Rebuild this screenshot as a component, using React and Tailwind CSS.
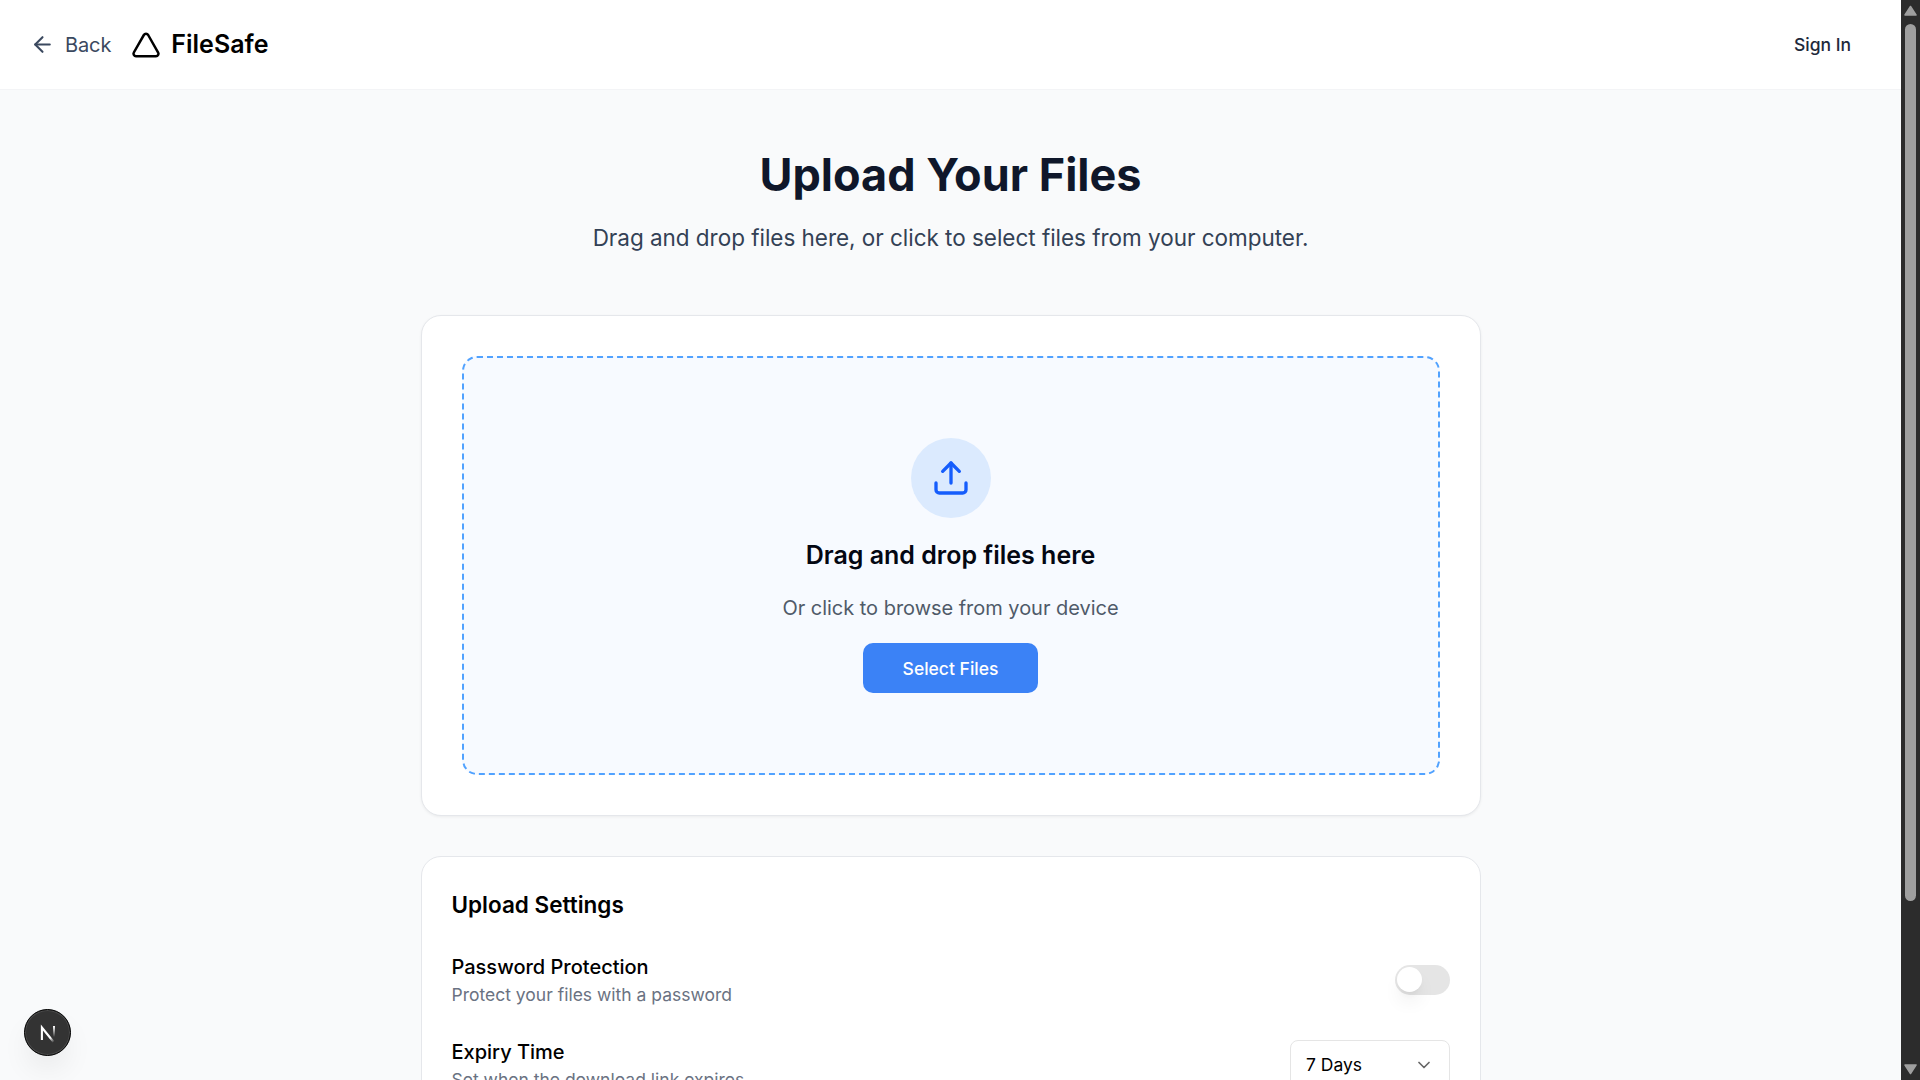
import { ArrowLeft, ChevronDown, Triangle, Upload } from "lucide-react";

function Header() {
  return (
    <header className="flex h-[90px] shrink-0 items-center justify-between border-b border-[#f3f4f6] bg-white px-[30px]">
      <div className="flex items-center gap-[20px]">
        <a className="flex items-center gap-[10px] text-[20px] leading-[30px] tracking-[-0.1px] text-[#3b495f]">
          <ArrowLeft className="size-[25px]" />
          Back
        </a>
        <div className="flex items-center gap-[10px] text-black">
          <Triangle className="size-[30px]" />
          <span className="text-[25px] leading-[35px] font-semibold">FileSafe</span>
        </div>
      </div>
      <button className="h-[50px] px-[20px] pt-px text-[17.5px] font-medium text-[#1e293b]">Sign In</button>
    </header>
  );
}

function DropZone() {
  return (
    <section className="rounded-[20px] border border-[#e5e7eb] bg-white p-[40px] shadow-[0_1px_3px_rgba(0,0,0,0.06)]">
      <div className="flex h-[419px] flex-col items-center rounded-[15px] border-2 border-dashed border-[#51a2ff] bg-[#f7faff] pt-[80px]">
        <div className="flex size-[80px] items-center justify-center rounded-full bg-[#dbeafe] text-[#155dfc]">
          <Upload className="size-[40px]" />
        </div>
        <h3 className="mt-[20px] pr-px text-[25px] leading-[35px] font-semibold text-[#030712]">Drag and drop files here</h3>
        <p className="mt-[20px] pr-px text-[20px] leading-[30px] tracking-[-0.03px] text-[#4f5a69]">Or click to browse from your device</p>
        <button className="mt-[20px] mr-px h-[50px] w-[175px] rounded-[10px] bg-[#3b82f6] pt-[2px] text-[17.5px] font-medium text-white">
          Select Files
        </button>
      </div>
    </section>
  );
}

function SettingRow({ title, description, children }) {
  return (
    <div className="mt-[30px] flex items-center justify-between">
      <div>
        <div className="text-[20px] leading-[30px] font-medium">{title}</div>
        <p className="text-[17.5px] leading-[25px] text-[#6a7282]">{description}</p>
      </div>
      {children}
    </div>
  );
}

function Settings() {
  return (
    <section className="mt-[40px] rounded-[20px] border border-[#e5e7eb] bg-white py-[30px] pr-[30px] pl-[29.5px] text-black">
      <h2 className="text-[22.5px] leading-[35px] font-semibold">Upload Settings</h2>
      <SettingRow title="Password Protection" description="Protect your files with a password">
        <button className="h-[30px] w-[55px] rounded-full bg-[#e5e5e5] p-[2px]">
          <span className="block size-[25px] rounded-full bg-white shadow-[0_12px_19px_-4px_rgba(0,0,0,0.1),0_5px_8px_-5px_rgba(0,0,0,0.1)]" />
        </button>
      </SettingRow>
      <SettingRow title="Expiry Time" description="Set when the download link expires">
        <button className="flex h-[50px] w-[160px] items-center justify-between rounded-[8px] border border-[#e5e5e5] px-[15px] text-[17.5px]">
          <span className="pt-[2px]">7 Days</span>
          <ChevronDown className="size-[20px] opacity-60" />
        </button>
      </SettingRow>
    </section>
  );
}

function Scrollbar() {
  return (
    <div className="flex h-full w-[19px] shrink-0 flex-col items-center bg-[#2c2c2c] pt-[5px] pb-[5px]">
      <svg className="h-[11px] w-[13px]" viewBox="0 0 13 11">
        <path d="M6.5 1.5 12 10H1Z" fill="#9f9f9f" stroke="#9f9f9f" strokeWidth="1.5" strokeLinejoin="round" />
      </svg>
      <div className="mt-[8px] h-[877px] w-[11px] rounded-full bg-[#9f9f9f]" />
      <svg className="mt-auto h-[11px] w-[13px]" viewBox="0 0 13 11">
        <path d="M6.5 9.5 12 1H1Z" fill="#9f9f9f" stroke="#9f9f9f" strokeWidth="1.5" strokeLinejoin="round" />
      </svg>
    </div>
  );
}

function DevBadge() {
  return (
    <div className="absolute bottom-[24px] left-[24px] flex size-[47px] items-center justify-center rounded-full border border-black bg-[#333333] shadow-[inset_0_0_0_1px_#4a4a4a,0_16px_32px_-8px_rgba(0,0,0,0.12)]">
      <svg className="h-[20px] w-[20px]" viewBox="0 0 20 20" fill="none">
        <defs>
          <linearGradient id="diag" x1="7" y1="8" x2="16" y2="19" gradientUnits="userSpaceOnUse">
            <stop offset="0.6" stopColor="#fff" />
            <stop offset="1" stopColor="#fff" stopOpacity="0" />
          </linearGradient>
          <linearGradient id="stem" x1="0" y1="3" x2="0" y2="14" gradientUnits="userSpaceOnUse">
            <stop stopColor="#fff" />
            <stop offset="1" stopColor="#fff" stopOpacity="0" />
          </linearGradient>
        </defs>
        <path d="M3.9 17V4.5L15.6 19" stroke="url(#diag)" strokeWidth="2.1" />
        <path d="M16 3V14" stroke="url(#stem)" strokeWidth="2" />
      </svg>
    </div>
  );
}

export default function App() {
  return (
    <div className="relative flex h-[1080px] w-[1920px] overflow-hidden bg-[#f9fafb] font-['Inter',sans-serif]">
      <div className="flex h-full w-[1901px] flex-col overflow-hidden">
        <Header />
        <main className="ml-[421px] w-[1060px] pt-[60px]">
          <h1 className="pr-px text-center text-[45px] leading-[50px] font-bold text-[#0f172a]">Upload Your Files</h1>
          <p className="mt-[20px] mb-[60px] pr-px text-center text-[22.5px] leading-[35px] tracking-[-0.03px] text-[#334155]">
            Drag and drop files here, or click to select files from your computer.
          </p>
          <DropZone />
          <Settings />
        </main>
      </div>
      <Scrollbar />
      <DevBadge />
    </div>
  );
}
